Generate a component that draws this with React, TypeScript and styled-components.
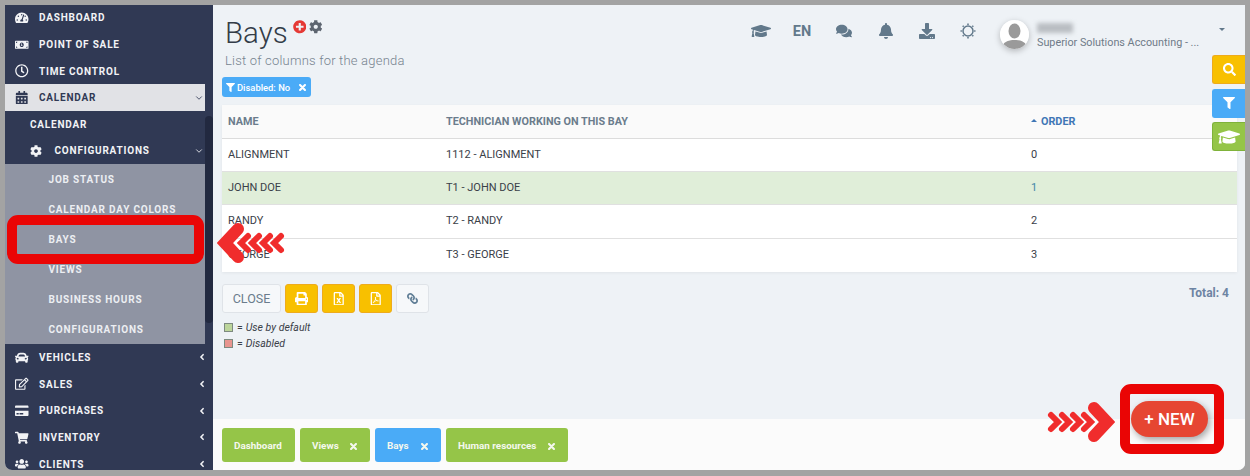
import styled, { createGlobalStyle } from 'styled-components';
import {
  FaAngleLeft,
  FaBell,
  FaCalendarAlt,
  FaCar,
  FaCog,
  FaComments,
  FaCreditCard,
  FaDownload,
  FaFilter,
  FaGraduationCap,
  FaLink,
  FaMoneyBillAlt,
  FaPlusCircle,
  FaPrint,
  FaRegClock,
  FaRegEdit,
  FaRegFileExcel,
  FaRegFilePdf,
  FaSearch,
  FaShoppingCart,
  FaTachometerAlt,
  FaUsers,
} from 'react-icons/fa';
import { FiChevronDown } from 'react-icons/fi';
import type { ReactNode } from 'react';

const GlobalStyle = createGlobalStyle`
  html, body {
    margin: 0;
    padding: 0;
    background: #a3a3a3;
    font-family: Roboto, "Liberation Sans", sans-serif;
    overflow: hidden;
  }
  * { box-sizing: border-box; }
`;

const Frame = styled.div`
  position: relative;
  width: 1250px;
  height: 476px;
  padding: 5px 5px 6px;
  overflow: hidden;
`;

const Window = styled.div`
  display: flex;
  width: 1240px;
  height: 465px;
  background: #eef2f6;
  border-radius: 0 0 7px 7px;
  overflow: hidden;
`;

const Sidebar = styled.nav`
  position: relative;
  flex: 0 0 208px;
  background: #303954;
  overflow: hidden;
`;

const Menu = styled.div`
  margin-top: -0.7px;
  width: 200px;
`;

const ScrollThumb = styled.div`
  position: absolute;
  right: 0;
  top: 111px;
  width: 8px;
  height: 207px;
  border-radius: 4px;
  background: #222940;
`;

const MenuRow = styled.div<{ $active?: boolean }>`
  display: flex;
  align-items: center;
  height: 26.7px;
  width: ${({ $active }) => ($active ? '200px' : '208px')};
  padding-left: 10px;
  background: ${({ $active }) => ($active ? '#e1e2e6' : 'transparent')};
  color: ${({ $active }) => ($active ? '#303954' : '#f2f3f6')};
  font-size: 10px;
  font-weight: 700;
  letter-spacing: 0.8px;
  white-space: nowrap;
`;

const MenuIcon = styled.span`
  display: flex;
  justify-content: center;
  width: 14px;
  margin-right: 10px;
  font-size: 13.5px;
`;

const MenuCaret = styled.span<{ $right: number }>`
  display: flex;
  margin-left: auto;
  margin-right: ${({ $right }) => $right}px;
  font-size: 10px;
`;

const SubRow = styled.div`
  display: flex;
  align-items: center;
  height: 26.5px;
  padding: 0 0 0 25px;
  color: #f2f3f6;
  font-size: 10px;
  font-weight: 700;
  letter-spacing: 0.8px;
`;

const SubRowIcon = styled.span`
  display: flex;
  justify-content: center;
  width: 12px;
  margin-right: 12.5px;
  font-size: 12px;
`;

const SubMenu = styled.div`
  background: #8f94a3;
  height: 180px;
`;

const SubMenuItem = styled.div`
  display: flex;
  align-items: center;
  height: 30px;
  padding-left: 43.5px;
  color: #eceef2;
  font-size: 10px;
  font-weight: 700;
  letter-spacing: 0.8px;
`;

const Main = styled.main`
  position: relative;
  flex: 1;
  display: flex;
  flex-direction: column;
  min-width: 0;
`;

const Content = styled.div`
  flex: 1;
  padding: 0 8px 0 9px;
  min-height: 0;
`;

const TopBar = styled.header`
  display: flex;
  justify-content: space-between;
  height: 72px;
`;

const TitleBlock = styled.div`
  padding: 10px 0 0 3px;
`;

const TitleLine = styled.div`
  display: flex;
  align-items: flex-start;
  height: 36px;
`;

const Title = styled.h1`
  margin: 0;
  color: #333c48;
  font-size: 29.5px;
  font-weight: 300;
  line-height: 37px;
`;

const TitleIcons = styled.div`
  display: flex;
  gap: 3px;
  margin: 5px 0 0 5px;
  font-size: 13.5px;
`;

const AddIcon = styled.span`
  display: flex;
  color: #e53935;
`;

const GearIcon = styled.span`
  display: flex;
  color: #5d6570;
`;

const Subtitle = styled.p`
  margin: 0;
  color: #76838f;
  font-size: 13px;
  font-weight: 300;
  letter-spacing: 0.2px;
  line-height: 20px;
`;

const TopActions = styled.div`
  display: flex;
  align-items: flex-start;
  padding-top: 16px;
  margin-right: 12px;
`;

const TopIcon = styled.span<{ $width: number }>`
  display: flex;
  justify-content: center;
  width: ${({ $width }) => $width}px;
  height: 20px;
  align-items: center;
  color: #62798b;
  font-size: 16px;
`;

const Lang = styled.span`
  display: flex;
  justify-content: center;
  width: 42px;
  height: 20px;
  align-items: center;
  color: #62798b;
  font-size: 14.5px;
  font-weight: 700;
`;

const UserBox = styled.div`
  display: flex;
  margin: -1px 0 0 12px;
`;

const Avatar = styled.svg`
  width: 29px;
  height: 29px;
  border-radius: 50%;
  box-shadow: 0 2px 6px rgba(0, 0, 0, 0.25);
`;

const UserText = styled.div`
  width: 167px;
  margin-left: 8px;
`;

const UserName = styled.div`
  width: 36px;
  height: 10px;
  margin: 3px 0 3px;
  background: #b9bdc2;
  filter: blur(2px);
`;

const UserCompany = styled.div`
  color: #6f7b88;
  font-size: 10.8px;
  line-height: 14px;
  white-space: nowrap;
`;

const UserCaret = styled.span`
  align-self: flex-start;
  margin: 8px 0 0 15px;
  width: 0;
  height: 0;
  border-left: 3px solid transparent;
  border-right: 3px solid transparent;
  border-top: 3px solid #62798b;
`;

const FilterChip = styled.div`
  display: flex;
  align-items: center;
  width: 89px;
  height: 20px;
  padding: 0 5px 0 4px;
  border-radius: 3px;
  background: #4aabf7;
  color: #fff;
  font-size: 9.4px;
  font-weight: 500;
`;

const ChipFilterIcon = styled.span`
  display: flex;
  margin-right: 2px;
  font-size: 9px;
`;

const ChipClose = styled.span`
  display: flex;
  margin-left: auto;
`;

const ChipLine = styled.div`
  display: flex;
  align-items: flex-start;
  height: 28px;
`;

const Table = styled.div`
  width: 1015px;
  background: #fff;
  box-shadow: 0 1px 3px rgba(0, 0, 0, 0.06);
`;

const TableRow = styled.div<{ $highlight?: boolean; $head?: boolean }>`
  display: grid;
  grid-template-columns: 218px 585px 1fr;
  align-items: center;
  height: ${({ $head }) => ($head ? '33.5px' : '33.4px')};
  padding: ${({ $head }) => ($head ? '0 0 0 6px' : '0 0 1px 6px')};
  border-bottom: ${({ $head }) => ($head ? '1px solid #dcdcdc' : '1px solid #e0e0e0')};
  background: ${({ $highlight, $head }) => ($highlight ? '#e0eed9' : $head ? '#fafafa' : '#fff')};
  color: ${({ $head }) => ($head ? '#6b7c8c' : '#3a4048')};
  font-size: ${({ $head }) => ($head ? '10.8px' : '11px')};
  font-weight: ${({ $head }) => ($head ? 700 : 400)};

  &:last-child {
    border-bottom: 0;
  }
`;

const OrderHead = styled.span`
  display: flex;
  align-items: center;
  color: #3f76b5;
`;

const SortCaret = styled.span`
  width: 0;
  height: 0;
  margin: 0 4px 2px 0;
  border-left: 3px solid transparent;
  border-right: 3px solid transparent;
  border-bottom: 3px solid #3f76b5;
`;

const OrderValue = styled.span<{ $link?: boolean }>`
  color: ${({ $link }) => ($link ? '#3f86a8' : 'inherit')};
`;

const ActionLine = styled.div`
  display: flex;
  align-items: flex-start;
  gap: 4px;
  margin-top: 12px;
  width: 1007px;
`;

const CloseButton = styled.button`
  width: 59px;
  height: 29px;
  padding: 0;
  border: 1px solid #dfe3e8;
  border-radius: 3px;
  background: #f6f8fa;
  color: #6b7c8c;
  font-family: inherit;
  font-size: 12.5px;
`;

const ExportButton = styled.button`
  display: flex;
  align-items: center;
  justify-content: center;
  width: 33px;
  height: 29px;
  padding: 0;
  border: 1px solid #eeab1c;
  border-radius: 3px;
  background: #f8c000;
  color: #fff;
  font-size: 13.5px;
`;

const LinkButton = styled(ExportButton)`
  border-color: #dfe3e8;
  background: #f6f8fa;
  color: #5f7d95;
  font-size: 11px;

  svg {
    transform: scaleX(-1);
  }
`;

const Total = styled.div`
  margin: 2px 0 0 auto;
  color: #6d84a3;
  font-size: 12px;
  font-weight: 700;
`;

const Legend = styled.div`
  margin-top: 6px;
  padding-left: 2px;
`;

const LegendRow = styled.div`
  display: flex;
  align-items: center;
  height: 16px;
  color: #3a4048;
  font-size: 10.5px;
`;

const Swatch = styled.span<{ $color: string }>`
  width: 9px;
  height: 9px;
  margin-right: 4px;
  border: 1px solid #7d8a80;
  background: ${({ $color }) => $color};
`;

const LegendLabel = styled.em`
  margin-left: 3px;
`;

const Footer = styled.footer`
  display: flex;
  align-items: flex-start;
  gap: 5px;
  flex: 0 0 51px;
  padding: 9px 0 0 9px;
  background: #fbfbfb;
`;

const Tab = styled.div<{ $current?: boolean; $width: number }>`
  display: flex;
  align-items: center;
  justify-content: space-between;
  width: ${({ $width }) => $width}px;
  height: 34px;
  padding: 0 13px 0 12px;
  border-radius: 3px;
  background: ${({ $current }) => ($current ? '#4aabf7' : '#95c548')};
  color: #f4f8ee;
  font-size: 9.9px;
  font-weight: 700;
`;

const TabClose = styled.span`
  display: flex;
  margin-top: 2px;
`;

const SideTools = styled.div`
  position: absolute;
  top: 50px;
  right: 0;
  display: flex;
  flex-direction: column;
  gap: 4.5px;
`;

const SideTool = styled.div<{ $bg: string; $edge: string; $size: number }>`
  display: flex;
  align-items: center;
  justify-content: center;
  width: 33px;
  height: 29px;
  border: 1px solid ${({ $edge }) => $edge};
  border-right: 0;
  border-radius: 3px 0 0 3px;
  background: ${({ $bg }) => $bg};
  color: #fff;
  font-size: ${({ $size }) => $size}px;
`;

const NewButton = styled.button`
  position: absolute;
  left: 918px;
  top: 396px;
  width: 77px;
  height: 36px;
  padding: 0;
  border: 0;
  border-radius: 18px;
  background: #e64632;
  box-shadow: 2px 3px 7px rgba(0, 0, 0, 0.35);
  color: #fff;
  font-family: inherit;
  font-size: 17px;
  font-weight: 500;
`;

const Highlight = styled.div<{ $left: number; $top: number; $width: number; $height: number }>`
  position: absolute;
  left: ${({ $left }) => $left}px;
  top: ${({ $top }) => $top}px;
  width: ${({ $width }) => $width}px;
  height: ${({ $height }) => $height}px;
  border: 10px solid #ea0505;
  border-radius: 11px;
`;

const ArrowSvg = styled.svg<{ $left: number; $top: number; $flip?: boolean }>`
  position: absolute;
  left: ${({ $left }) => $left}px;
  top: ${({ $top }) => $top}px;
  transform: ${({ $flip }) => ($flip ? 'scaleX(-1)' : 'none')};
`;

function Arrows({ left, top, flip }: { left: number; top: number; flip?: boolean }) {
  return (
    <ArrowSvg $left={left} $top={top} $flip={flip} width="72" height="50" viewBox="0 0 72 50" fill="none" stroke="#f02c2c" strokeLinecap="round">
      {[24, 35, 46, 57].map((x) => (
        <polyline key={x} points={`${x + 7},18 ${x},25 ${x + 7},32`} strokeWidth="6" />
      ))}
      <polyline points="21,11 8,25 21,39" strokeWidth="12" />
    </ArrowSvg>
  );
}

// thick x of the chips and tabs, heavier than the icon font's one
function CloseMark() {
  return (
    <svg width="7" height="7" viewBox="0 0 8 8" stroke="currentColor" strokeWidth="2.4" strokeLinecap="round">
      <path d="M1.2 1.2l5.6 5.6M6.8 1.2L1.2 6.8" />
    </svg>
  );
}

function SunRing() {
  return (
    <svg width="16" height="16" viewBox="0 0 16 16" fill="none" stroke="currentColor">
      <circle cx="8" cy="8" r="5" strokeWidth="1.5" />
      <path strokeWidth="1.6" d="M8 .5v1.4M8 14.1v1.4M.5 8h1.4M14.1 8h1.4M2.7 2.7l1 1M12.3 12.3l1 1M13.3 2.7l-1 1M3.7 12.3l-1 1" />
    </svg>
  );
}

type NavItem = { label: string; icon: ReactNode };

const topItems: NavItem[] = [
  { label: 'DASHBOARD', icon: <FaTachometerAlt /> },
  { label: 'POINT OF SALE', icon: <FaMoneyBillAlt /> },
  { label: 'TIME CONTROL', icon: <FaRegClock /> },
];

const bottomItems: NavItem[] = [
  { label: 'VEHICLES', icon: <FaCar /> },
  { label: 'SALES', icon: <FaRegEdit /> },
  { label: 'PURCHASES', icon: <FaCreditCard /> },
  { label: 'INVENTORY', icon: <FaShoppingCart /> },
  { label: 'CLIENTS', icon: <FaUsers /> },
];

const subItems = ['JOB STATUS', 'CALENDAR DAY COLORS', 'BAYS', 'VIEWS', 'BUSINESS HOURS', 'CONFIGURATIONS'];

const rows = [
  { name: 'ALIGNMENT', tech: '1112 - ALIGNMENT', order: '0' },
  { name: 'JOHN DOE', tech: 'T1 - JOHN DOE', order: '1', highlight: true },
  { name: 'RANDY', tech: 'T2 - RANDY', order: '2' },
  { name: 'GEORGE', tech: 'T3 - GEORGE', order: '3' },
];

const tabs = [
  { label: 'Dashboard', width: 73 },
  { label: 'Views', width: 70, closable: true },
  { label: 'Bays', width: 66, closable: true, current: true },
  { label: 'Human resources', width: 122, closable: true },
];

export default function App() {
  return (
    <Frame>
      <GlobalStyle />
      <Window>
        <Sidebar>
          <ScrollThumb />
          <Menu>
            {topItems.map((item) => (
              <MenuRow key={item.label}>
                <MenuIcon>{item.icon}</MenuIcon>
                {item.label}
              </MenuRow>
            ))}
            <MenuRow $active>
              <MenuIcon>
                <FaCalendarAlt />
              </MenuIcon>
              CALENDAR
              <MenuCaret $right={1}>
                <FiChevronDown />
              </MenuCaret>
            </MenuRow>
            <SubRow>CALENDAR</SubRow>
            <SubRow>
              <SubRowIcon>
                <FaCog />
              </SubRowIcon>
              CONFIGURATIONS
              <MenuCaret $right={1}>
                <FiChevronDown />
              </MenuCaret>
            </SubRow>
            <SubMenu>
              {subItems.map((item) => (
                <SubMenuItem key={item}>{item}</SubMenuItem>
              ))}
            </SubMenu>
            {bottomItems.map((item) => (
              <MenuRow key={item.label}>
                <MenuIcon>{item.icon}</MenuIcon>
                {item.label}
                <MenuCaret $right={6}>
                  <FaAngleLeft />
                </MenuCaret>
              </MenuRow>
            ))}
          </Menu>
        </Sidebar>
        <Main>
          <Content>
            <TopBar>
              <TitleBlock>
                <TitleLine>
                  <Title>Bays</Title>
                  <TitleIcons>
                    <AddIcon>
                      <FaPlusCircle />
                    </AddIcon>
                    <GearIcon>
                      <FaCog />
                    </GearIcon>
                  </TitleIcons>
                </TitleLine>
                <Subtitle>List of columns for the agenda</Subtitle>
              </TitleBlock>
              <TopActions>
                <TopIcon $width={41}>
                  <FaGraduationCap size={20} />
                </TopIcon>
                <Lang>EN</Lang>
                <TopIcon $width={42}>
                  <FaComments />
                </TopIcon>
                <TopIcon $width={41}>
                  <FaBell />
                </TopIcon>
                <TopIcon $width={41}>
                  <FaDownload />
                </TopIcon>
                <TopIcon $width={41}>
                  <SunRing />
                </TopIcon>
                <UserBox>
                  <Avatar viewBox="0 0 29 29">
                    <rect width="29" height="29" fill="#fff" />
                    <ellipse cx="14.5" cy="11" rx="6" ry="7.5" fill="#9a9a9a" />
                    <path d="M2 29c0-7 6-9 12.5-9S27 22 27 29z" fill="#9a9a9a" />
                  </Avatar>
                  <UserText>
                    <UserName />
                    <UserCompany>Superior Solutions Accounting - ...</UserCompany>
                  </UserText>
                  <UserCaret />
                </UserBox>
              </TopActions>
            </TopBar>
            <ChipLine>
              <FilterChip>
                <ChipFilterIcon>
                  <FaFilter />
                </ChipFilterIcon>
                Disabled: No
                <ChipClose>
                  <CloseMark />
                </ChipClose>
              </FilterChip>
            </ChipLine>
            <Table>
              <TableRow $head>
                <span>NAME</span>
                <span>TECHNICIAN WORKING ON THIS BAY</span>
                <OrderHead>
                  <SortCaret />
                  ORDER
                </OrderHead>
              </TableRow>
              {rows.map((row) => (
                <TableRow key={row.name} $highlight={row.highlight}>
                  <span>{row.name}</span>
                  <span>{row.tech}</span>
                  <OrderValue $link={row.highlight}>{row.order}</OrderValue>
                </TableRow>
              ))}
            </Table>
            <ActionLine>
              <CloseButton>CLOSE</CloseButton>
              <ExportButton>
                <FaPrint />
              </ExportButton>
              <ExportButton>
                <FaRegFileExcel />
              </ExportButton>
              <ExportButton>
                <FaRegFilePdf />
              </ExportButton>
              <LinkButton>
                <FaLink />
              </LinkButton>
              <Total>Total: 4</Total>
            </ActionLine>
            <Legend>
              <LegendRow>
                <Swatch $color="#bcd59b" />= <LegendLabel>Use by default</LegendLabel>
              </LegendRow>
              <LegendRow>
                <Swatch $color="#e8958f" />= <LegendLabel>Disabled</LegendLabel>
              </LegendRow>
            </Legend>
          </Content>
          <Footer>
            {tabs.map((tab) => (
              <Tab key={tab.label} $current={tab.current} $width={tab.width}>
                {tab.label}
                {tab.closable && (
                  <TabClose>
                    <CloseMark />
                  </TabClose>
                )}
              </Tab>
            ))}
          </Footer>
          <SideTools>
            <SideTool $bg="#f8c000" $edge="#eeab1c" $size={13}>
              <FaSearch />
            </SideTool>
            <SideTool $bg="#4aabf7" $edge="#4aabf7" $size={12}>
              <FaFilter />
            </SideTool>
            <SideTool $bg="#95c548" $edge="#7fb23a" $size={22}>
              <FaGraduationCap />
            </SideTool>
          </SideTools>
          <NewButton>+ NEW</NewButton>
        </Main>
      </Window>
      <Highlight $left={7} $top={215} $width={197} $height={49} />
      <Highlight $left={1120} $top={384} $width={104} $height={70} />
      <Arrows left={217} top={218} />
      <Arrows left={1043} top={397} flip />
    </Frame>
  );
}
